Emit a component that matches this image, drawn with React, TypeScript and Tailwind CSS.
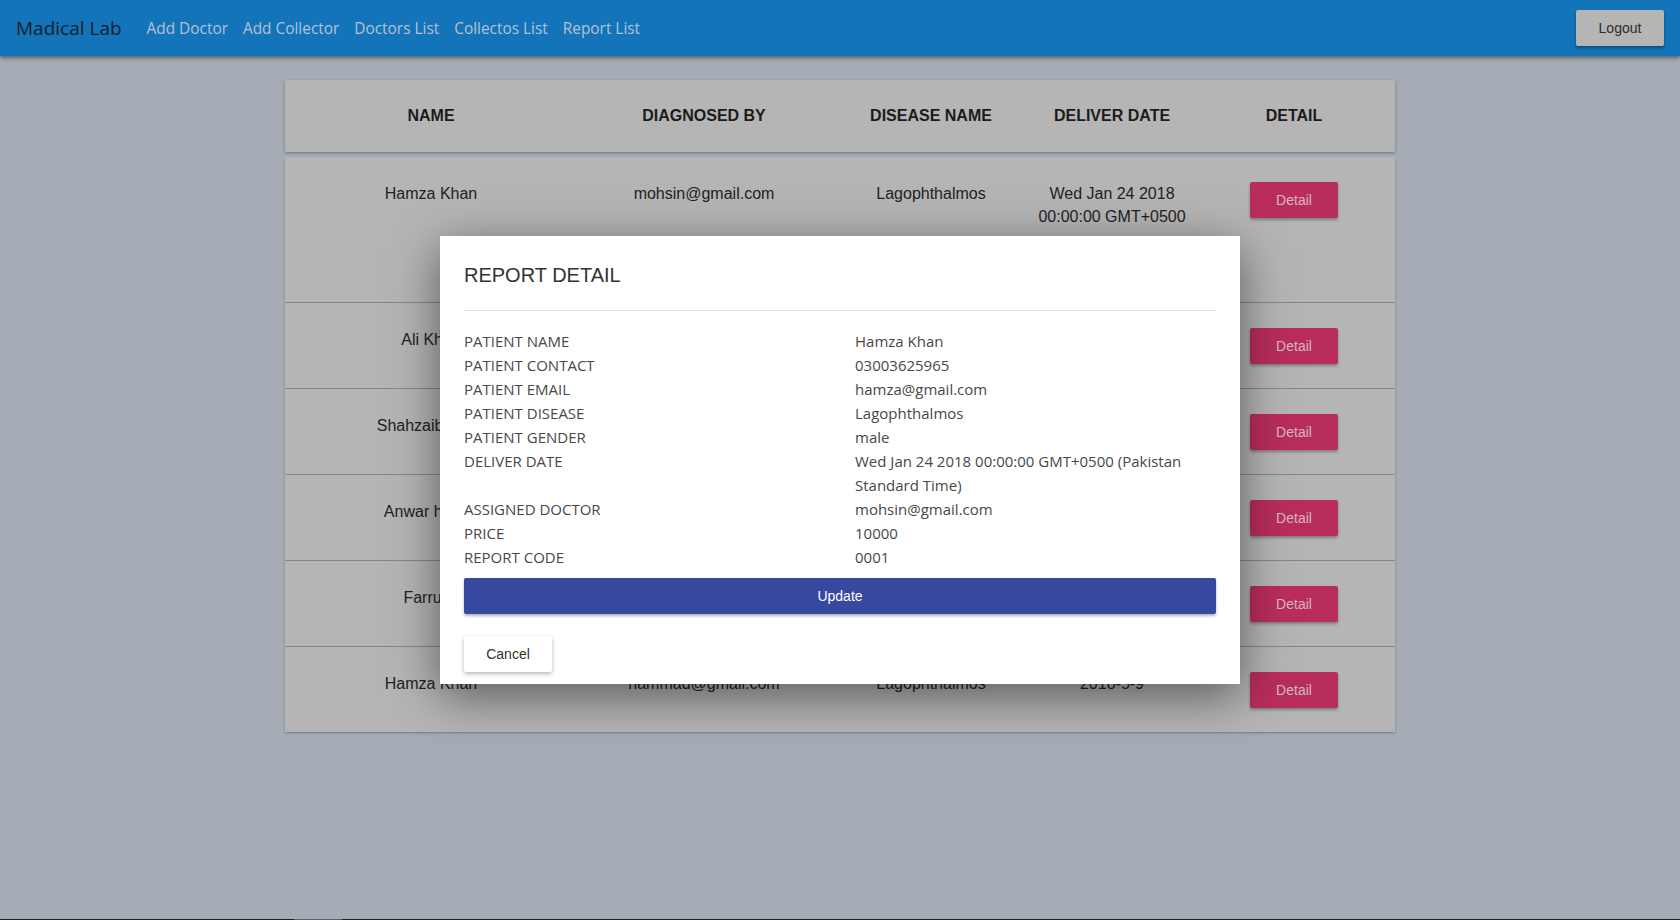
import React from "react";

const rows = [
  { name: "Hamza Khan", by: "mohsin@gmail.com", disease: "Lagophthalmos", date: ["Wed Jan 24 2018", "00:00:00 GMT+0500"], tall: true },
  { name: "Ali Khan", by: "mohsin@gmail.com", disease: "Lagophthalmos", date: ["2018-2-12"] },
  { name: "Shahzaib Khan", by: "mohsin@gmail.com", disease: "Lagophthalmos", date: ["2018-3-1"] },
  { name: "Anwar haider", by: "hammad@gmail.com", disease: "Lagophthalmos", date: ["2018-4-7"] },
  { name: "Farrukh", by: "hammad@gmail.com", disease: "Lagophthalmos", date: ["2018-4-20"] },
  { name: "Hamza Khan", by: "hammad@gmail.com", disease: "Lagophthalmos", date: ["2018-5-9"] },
];

const details: [string, React.ReactNode][] = [
  ["PATIENT NAME", "Hamza Khan"],
  ["PATIENT CONTACT", "03003625965"],
  ["PATIENT EMAIL", "hamza@gmail.com"],
  ["PATIENT DISEASE", "Lagophthalmos"],
  ["PATIENT GENDER", "male"],
  [
    "DELIVER DATE",
    <>
      Wed Jan 24 2018 00:00:00 GMT+0500 (Pakistan
      <br />
      Standard Time)
    </>,
  ],
  ["ASSIGNED DOCTOR", "mohsin@gmail.com"],
  ["PRICE", "10000"],
  ["REPORT CODE", "0001"],
];

const cols = "grid grid-cols-[292px_254px_200px_162px_202px]";

function Navbar() {
  return (
    <div className="relative z-10 flex items-center h-[56px] shrink-0 bg-[#1474b9] shadow-[0_2px_4px_rgba(0,0,0,0.45)] pl-4 pr-4 font-['Open_Sans',sans-serif]">
      <span className="text-[19px] text-[#14202b] mr-[25px]">Madical Lab</span>
      <nav className="flex items-center gap-[15px] text-[15.4px] text-[#b3c2d3] pt-[1px]">
        <a>Add Doctor</a>
        <a>Add Collector</a>
        <a>Doctors List</a>
        <a>Collectos List</a>
        <a>Report List</a>
      </nav>
      <div className="flex-1" />
      <button className="w-[88px] h-[36px] rounded-[2px] bg-[#b5b5b5] text-[14px] text-[#2c2c2c] shadow-[0_2px_3px_rgba(0,0,0,0.35)] font-['Liberation_Sans',Arial,sans-serif]">
        Logout
      </button>
    </div>
  );
}

function ReportTable() {
  return (
    <div className="w-[1110px] mx-auto mt-[24px] font-['Liberation_Sans',Arial,sans-serif] text-[16px]">
      <div className={`${cols} h-[72px] items-center bg-[#b5b5b5] rounded-[2px] shadow-[0_1px_3px_rgba(0,0,0,0.35)] font-bold text-[#1b1b1b] text-center`}>
        <div>NAME</div>
        <div>DIAGNOSED BY</div>
        <div>DISEASE NAME</div>
        <div>DELIVER DATE</div>
        <div>DETAIL</div>
      </div>
      <div className="mt-[5px] flex flex-col gap-[1px]">
        {rows.map((r, i) => (
          <div
            key={i}
            className={`${cols} items-start pt-[25px] bg-[#b5b5b5] text-center text-[#222] leading-[23px] shadow-[0_1px_2px_rgba(0,0,0,0.3)] ${r.tall ? "h-[145px]" : "h-[85px]"}`}
          >
            <div>{r.name}</div>
            <div>{r.by}</div>
            <div>{r.disease}</div>
            <div className="whitespace-nowrap">
              {r.date.map((d) => (
                <div key={d}>{d}</div>
              ))}
            </div>
            <div className="flex justify-center">
              <button className="w-[88px] h-[36px] rounded-[2px] bg-[#b92d5c] text-[14px] text-[#d3b8c3] shadow-[0_2px_3px_rgba(0,0,0,0.3)]">
                Detail
              </button>
            </div>
          </div>
        ))}
      </div>
    </div>
  );
}

function ReportModal() {
  return (
    <div className="absolute left-[440px] top-[236px] w-[800px] h-[448px] bg-white px-6 pt-6 shadow-[0_12px_45px_rgba(0,0,0,0.5)] z-20">
      <h2 className="h-[30px] leading-[30px] text-[20px] text-[#333] font-['Liberation_Sans',Arial,sans-serif]">
        REPORT DETAIL
      </h2>
      <div className="mt-[20px] border-t border-[#e3e3e3]" />
      <div className="mt-[18px] grid grid-cols-[391px_1fr] text-[15px] leading-[24px] text-[#484848] font-['Open_Sans',sans-serif]">
        {details.map(([k, v]) => (
          <React.Fragment key={k}>
            <div>{k}</div>
            <div>{v}</div>
          </React.Fragment>
        ))}
      </div>
      <button className="mt-[9px] w-full h-[36px] rounded-[2px] bg-[#3748a0] text-white text-[14px] shadow-[0_2px_3px_rgba(0,0,0,0.3)] font-['Liberation_Sans',Arial,sans-serif]">
        Update
      </button>
      <button className="block mt-[22px] w-[88px] h-[36px] rounded-[2px] bg-white text-[#333] text-[14px] shadow-[0_2px_4px_rgba(0,0,0,0.28)] font-['Liberation_Sans',Arial,sans-serif]">
        Cancel
      </button>
    </div>
  );
}

export default function App() {
  return (
    <div className="relative flex flex-col h-[920px] bg-[#a5acb5] overflow-hidden">
      <Navbar />
      <div className="flex-1">
        <ReportTable />
      </div>
      <div className="flex h-[1px] shrink-0 bg-[#1b2026]">
        <div className="ml-[294px] w-[48px] bg-[#5c636b]" />
      </div>
      <ReportModal />
    </div>
  );
}
